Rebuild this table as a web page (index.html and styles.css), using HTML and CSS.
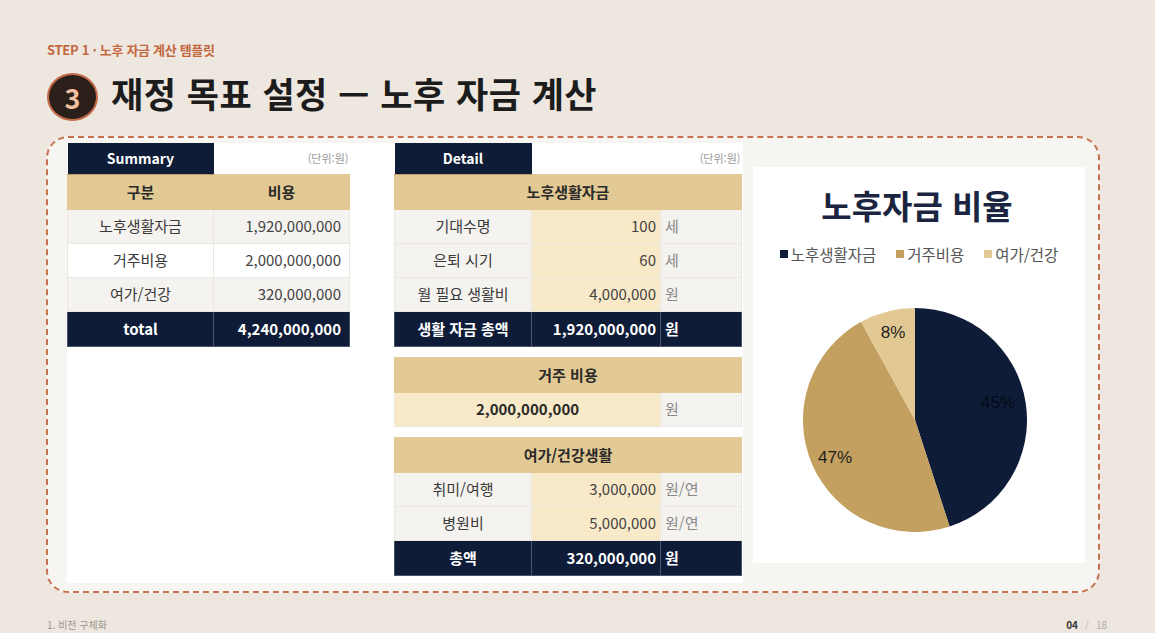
FILE: index.html
```html
<!DOCTYPE html>
<html lang="ko">
<head>
<meta charset="utf-8">
<title>재정 목표 설정 — 노후 자금 계산</title>
<link rel="stylesheet" href="styles.css">
</head>
<body>
<div class="page">
  <div class="step">STEP 1 · 노후 자금 계산 템플릿</div>
  <div class="heading">
    <span class="badge">3</span>
    <h1>재정 목표 설정 — 노후 자금 계산</h1>
  </div>

  <div class="frame">
    <div class="sheet">
      <table class="t summary">
        <colgroup><col class="s1"><col class="s2"></colgroup>
        <tr class="r-tag"><td class="tag">Summary</td><td class="unit">(단위:원)</td></tr>
        <tr class="r-gold"><td class="gold">구분</td><td class="gold">비용</td></tr>
        <tr class="r-body alt"><td class="lbl">노후생활자금</td><td class="num">1,920,000,000</td></tr>
        <tr class="r-body"><td class="lbl">거주비용</td><td class="num">2,000,000,000</td></tr>
        <tr class="r-body alt"><td class="lbl">여가/건강</td><td class="num">320,000,000</td></tr>
        <tr class="r-total"><td class="tot">total</td><td class="tot num">4,240,000,000</td></tr>
      </table>

      <div class="detail">
        <table class="t dt">
          <colgroup><col class="d1"><col class="d2"><col class="d3"></colgroup>
          <tr class="r-tag"><td class="tag">Detail</td><td class="unit" colspan="2">(단위:원)</td></tr>
          <tr class="r-gold"><td class="gold" colspan="3">노후생활자금</td></tr>
          <tr class="r-body"><td class="lbl alt">기대수명</td><td class="num cream">100</td><td class="u alt">세</td></tr>
          <tr class="r-body"><td class="lbl alt">은퇴 시기</td><td class="num cream">60</td><td class="u alt">세</td></tr>
          <tr class="r-body"><td class="lbl alt">월 필요 생활비</td><td class="num cream">4,000,000</td><td class="u alt">원</td></tr>
          <tr class="r-total"><td class="tot">생활 자금 총액</td><td class="tot num">1,920,000,000</td><td class="tot u">원</td></tr>
        </table>

        <table class="t dt">
          <colgroup><col class="d1"><col class="d2"><col class="d3"></colgroup>
          <tr class="r-gold"><td class="gold" colspan="3">거주 비용</td></tr>
          <tr class="r-body"><td class="cream big" colspan="2">2,000,000,000</td><td class="u alt">원</td></tr>
        </table>

        <table class="t dt">
          <colgroup><col class="d1"><col class="d2"><col class="d3"></colgroup>
          <tr class="r-gold"><td class="gold" colspan="3">여가/건강생활</td></tr>
          <tr class="r-body"><td class="lbl alt">취미/여행</td><td class="num cream">3,000,000</td><td class="u alt">원/연</td></tr>
          <tr class="r-body"><td class="lbl alt">병원비</td><td class="num cream">5,000,000</td><td class="u alt">원/연</td></tr>
          <tr class="r-total"><td class="tot">총액</td><td class="tot num">320,000,000</td><td class="tot u">원</td></tr>
        </table>
      </div>
    </div>

    <div class="chart">
      <div class="chart-title">노후자금 비율</div>
      <div class="legend">
        <span class="lg"><i class="sq navy"></i>노후생활자금</span>
        <span class="lg"><i class="sq gold2"></i>거주비용</span>
        <span class="lg"><i class="sq light"></i>여가/건강</span>
      </div>
      <svg class="pie" width="226" height="226" viewBox="-1 -1 226 226">
        <path d="M112 112 L112 0 A112 112 0 0 1 146.61 218.52 Z" fill="#0e1c38"/>
        <path d="M112 112 L146.61 218.52 A112 112 0 0 1 58.04 13.85 Z" fill="#c3a05f"/>
        <path d="M112 112 L58.04 13.85 A112 112 0 0 1 112 0 Z" fill="#e2c993"/>
        <text x="90" y="30" class="pl">8%</text>
        <text x="195" y="100" class="pl dark">45%</text>
        <text x="32" y="155" class="pl">47%</text>
      </svg>
    </div>
  </div>

  <div class="footer">
    <span class="sec">1. 비전 구체화</span>
    <span class="pg"><b>04</b><span class="sl">/</span><span class="tot-p">18</span></span>
  </div>
</div>
</body>
</html>
```

FILE: styles.css
```css
* { box-sizing: border-box; }
html, body { margin: 0; padding: 0; }
body {
  width: 1155px;
  height: 633px;
  overflow: hidden;
  background: #ede7e0;
  font-family: "Noto Sans CJK KR", "Noto Sans", sans-serif;
  color: #222;
}
.page {
  padding: 41px 0 0 46px;
}
.step {
  font-size: 13px;
  line-height: 18px;
  font-weight: 700;
  color: #c4673f;
  padding-left: 1px;
  letter-spacing: -0.3px;
}
.heading {
  margin-top: 14px;
  display: flex;
  align-items: center;
  height: 48px;
}
.badge {
  width: 51px;
  height: 48px;
  border-radius: 50%;
  border: 2.5px solid #c56a4a;
  background: #2b1f19;
  color: #f2bf9f;
  font-size: 27px;
  font-weight: 700;
  display: flex;
  align-items: center;
  justify-content: center;
  margin-left: 1px;
}
.heading h1 {
  margin: 0 0 8px 13px;
  font-size: 35px;
  line-height: 44px;
  font-weight: 700;
  color: #1c1c1c;
  letter-spacing: 0.5px;
}
.frame {
  margin-top: 15px;
  width: 1054px;
  height: 457px;
  border: 2px dashed #c8714f;
  border-radius: 22px;
  background: #f7f5f1;
  padding: 5px 0 0 19px;
  display: flex;
  gap: 10px;
  align-items: flex-start;
}
.sheet {
  width: 676px;
  height: 440px;
  background: #fff;
  display: flex;
  gap: 44px;
  align-items: flex-start;
}
.detail {
  display: flex;
  flex-direction: column;
  gap: 10px;
}
.t {
  border-collapse: collapse;
  table-layout: fixed;
  font-size: 15px;
  color: #333;
}
.summary { width: 282px; }
.s1 { width: 146px; }
.s2 { width: 136px; }
.dt { width: 347px; }
.d1 { width: 137px; }
.d2 { width: 129px; }
.d3 { width: 81px; }
.t td {
  padding: 0 4px;
  line-height: 20px;
  white-space: nowrap;
  border: 1px solid #ebe7e1;
}
.summary td.num { padding-right: 8px; }
.r-tag td { height: 31px; }
.r-gold td { height: 35px; }
.r-body td { height: 34px; }
.r-total td { height: 35px; }
.tag {
  background: #0e1c38;
  color: #fff;
  font-weight: 700;
  font-size: 14px;
  text-align: center;
  border: none !important;
  border-bottom: 1px solid #b79c66 !important;
}
.unit {
  border: none !important;
  text-align: right;
  font-size: 11px;
  color: #9a9a9a;
  padding-right: 1px !important;
}
.gold {
  background: #e3c993;
  font-weight: 700;
  text-align: center;
  color: #2a2a2a;
  border-color: #e3c993 !important;
}
.lbl { text-align: center; color: #3a3a3a; }
.num { text-align: right; color: #444; }
.summary .alt td, .alt { background: #f5f3f0; }
.cream { background: #f8e9c9; }
.u { color: #8a8a8a; text-align: left; }
.big { text-align: center; font-weight: 700; color: #2a2a2a; }
.tot {
  background: #0e1c38;
  color: #fff !important;
  font-weight: 700;
  border-color: #4a5468 !important;
  border-top: 1px solid #c9a96a !important;
}
td.tot:not(.num):not(.u) { text-align: center; }
.chart {
  margin-top: 24px;
  width: 332px;
  height: 396px;
  background: #fff;
  display: flex;
  flex-direction: column;
}
.chart-title {
  margin-top: 18px;
  text-align: center;
  font-size: 33px;
  line-height: 40px;
  font-weight: 700;
  color: #1b2540;
  padding-right: 4px;
}
.legend {
  margin-top: 19px;
  display: flex;
  justify-content: center;
  gap: 20px;
  font-size: 15.5px;
  line-height: 20px;
  color: #555;
  padding-left: 0;
}
.lg { display: inline-flex; align-items: center; }
.sq {
  display: inline-block;
  width: 8px;
  height: 8px;
  margin-right: 3px;
}
.navy { background: #0e1c38; }
.gold2 { background: #c3a05f; }
.light { background: #e2c993; }
.pie {
  margin-top: 43px;
  margin-left: 49px;
}
.pl {
  font-family: "Liberation Sans", Arial, sans-serif;
  font-size: 17px;
  fill: #1e1e1e;
  text-anchor: middle;
}
.pl.dark { fill: #050a14; }
.footer {
  margin-top: 25px;
  width: 1061px;
  display: flex;
  justify-content: space-between;
  font-size: 10px;
  line-height: 14px;
}
.sec { color: #9a948e; padding-left: 1px; }
.pg b { color: #333; font-weight: 700; }
.sl { color: #bbb; margin: 0 7px; }
.tot-p { color: #aaa; }
```
